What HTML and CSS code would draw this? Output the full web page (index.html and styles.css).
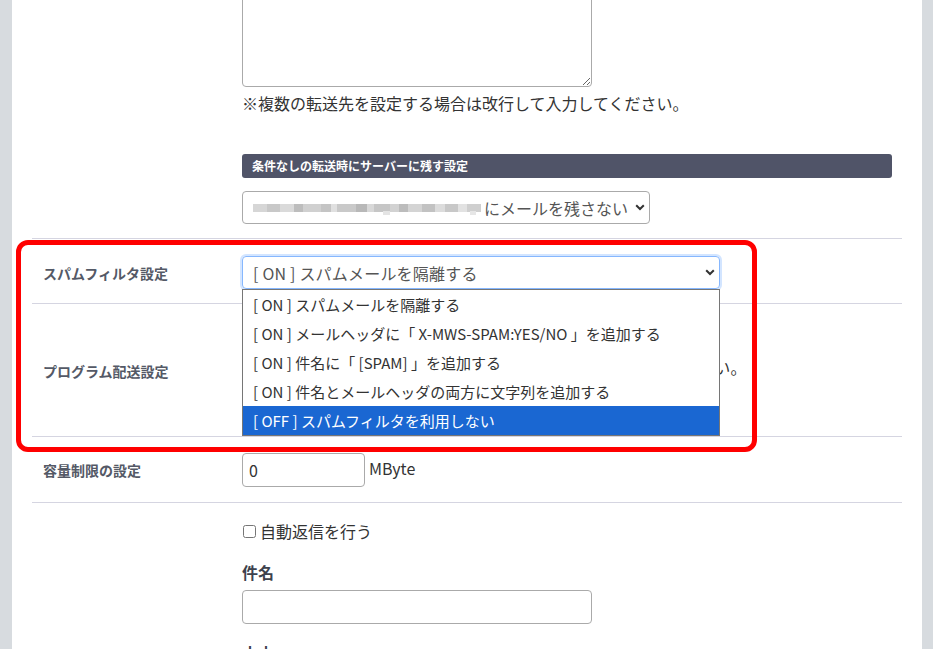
FILE: index.html
```html
<!DOCTYPE html>
<html lang="ja">
<head>
    <meta charset="UTF-8">
    <meta name="viewport" content="width=device-width, initial-scale=1.0">
    <title>メール設定</title>
    <link rel="stylesheet" href="styles.css">
</head>
<body>
    <div class="card">
        <!-- 転送設定 -->
        <div class="row">
            <div class="row-label"></div>
            <div class="row-body">
                <textarea class="forward-list"></textarea>
                <p class="note">※複数の転送先を設定する場合は改行して入力してください。</p>
                <div class="section-bar">条件なしの転送時にサーバーに残す設定</div>
                <div class="fake-select">
                    <span class="masked-address"></span>
                    <span>にメールを残さない</span>
                    <svg class="chevron" width="10" height="7" viewBox="0 0 10 7"><path d="M1.2 1.2L5 5l3.8-3.8" fill="none" stroke="#333" stroke-width="2"/></svg>
                </div>
            </div>
        </div>

        <div class="highlight">
            <div class="row row-spam">
                <div class="row-label">スパムフィルタ設定</div>
                <div class="row-body">
                    <div class="select-wrap">
                        <div class="fake-select spam-select focused">
                            <span>[ ON ] スパムメールを隔離する</span>
                            <svg class="chevron" width="10" height="7" viewBox="0 0 10 7"><path d="M1.2 1.2L5 5l3.8-3.8" fill="none" stroke="#333" stroke-width="2"/></svg>
                        </div>
                        <ul class="option-list">
                            <li>[ ON ] スパムメールを隔離する</li>
                            <li>[ ON ] メールヘッダに「 X-MWS-SPAM:YES/NO 」を追加する</li>
                            <li>[ ON ] 件名に「 [SPAM] 」を追加する</li>
                            <li>[ ON ] 件名とメールヘッダの両方に文字列を追加する</li>
                            <li class="active">[ OFF ] スパムフィルタを利用しない</li>
                        </ul>
                    </div>
                </div>
            </div>

            <div class="row row-program">
                <div class="row-label">プログラム配送設定</div>
                <div class="row-body">
                    <p class="program-note">プログラム配送を利用する場合はサポートへお問い合わせください。</p>
                </div>
            </div>
        </div>

        <div class="row row-quota">
            <div class="row-label">容量制限の設定</div>
            <div class="row-body inline">
                <input type="text" class="quota" value="0">
                <span class="unit">MByte</span>
            </div>
        </div>

        <div class="row row-top">
            <div class="row-label"></div>
            <div class="row-body">
                <label class="check"><input type="checkbox"> 自動返信を行う</label>
                <div class="field-title">件名</div>
                <input type="text" class="text-field">
                <div class="field-title">本文</div>
                <textarea class="forward-list"></textarea>
            </div>
        </div>
    </div>
</body>
</html>
```

FILE: styles.css
```css
html {
    overflow: hidden;
}
body {
    margin: 0;
    background-color: #d7dbdf;
    font-family: "Noto Sans CJK JP", "Noto Sans", sans-serif;
    color: #333;
    font-size: 16px;
    line-height: 24px;
}
.card {
    background-color: #fff;
    margin: -49px 11px 0 12px;
    padding: 0 20px;
}
.row {
    display: grid;
    grid-template-columns: 210px 1fr;
    padding: 16px 0 14px;
    border-bottom: 1px solid #d5d5e1;
}
.row-label {
    display: flex;
    align-items: center;
    padding-left: 11px;
    font-size: 14px;
    font-weight: bold;
    color: #545966;
}
.row-body {
    min-width: 0;
}
.forward-list {
    display: block;
    box-sizing: border-box;
    width: 350px;
    height: 120px;
    border: 1px solid #aaa;
    border-radius: 4px;
    font-family: inherit;
}
.note {
    margin: 4px 0 0;
}
.section-bar {
    margin-top: 39px;
    height: 24px;
    line-height: 24px;
    padding-left: 10px;
    border-radius: 3px;
    background-color: #505468;
    color: #fff;
    font-size: 12px;
    font-weight: bold;
    margin-right: 10px;
}
.fake-select {
    display: flex;
    align-items: center;
    box-sizing: border-box;
    width: 408px;
    height: 33px;
    margin-top: 13px;
    padding: 0 4px 0 10px;
    border: 1px solid #aaa;
    border-radius: 4px;
    color: #555;
    white-space: nowrap;
}
.fake-select .chevron {
    margin-left: auto;
    flex-shrink: 0;
}
.masked-address {
    display: inline-block;
    flex-shrink: 0;
    width: 228px;
    height: 14px;
    margin-right: 3px;
    background:
        linear-gradient(90deg, transparent 0 57%, #e4e4e4 57% 60%, transparent 60% 95%, #e6e6e6 95% 98%, transparent 98%) 0 10px / 100% 4px no-repeat,
        linear-gradient(90deg, #d6d6d6 0 6%, #c8c8c8 6% 12%, #dadada 12% 18%, #bdbdbd 18% 22%, #d0d0d0 22% 30%, #c4c4c4 30% 34%, #e0e0e0 34% 37%, #c9c9c9 37% 45%, #b8b8b8 45% 50%, #d8d8d8 50% 53%, #c6c6c6 53% 60%, #d2d2d2 60% 64%, #bcbcbc 64% 68%, #d4d4d4 68% 74%, #c2c2c2 74% 80%, #dcdcdc 80% 84%, #c8c8c8 84% 90%, #e2e2e2 90% 94%, #cfcfcf 94% 100%) 0 3px / 100% 8px no-repeat;
}
.highlight {
    position: relative;
}
.highlight::after {
    content: "";
    position: absolute;
    top: 1px;
    left: -16px;
    width: 741px;
    height: 212px;
    box-sizing: border-box;
    border: 5px solid #ff0000;
    border-radius: 12px;
    pointer-events: none;
    z-index: 3;
}
.row-spam {
    padding: 17px 0 14px;
}
.select-wrap {
    position: relative;
    width: 478px;
}
.spam-select {
    width: 478px;
    margin-top: 0;
    letter-spacing: 0.2px;
}
.focused {
    border-color: #86b7fe;
    box-shadow: 0 0 0 2px rgba(13, 110, 253, 0.18);
}
.option-list {
    position: absolute;
    top: 33px;
    left: 0;
    right: 0;
    z-index: 2;
    margin: 0;
    padding: 0;
    list-style: none;
    background-color: #fff;
    border: 1px solid #767676;
}
.option-list li {
    height: 29px;
    line-height: 30px;
    padding-left: 10px;
    font-size: 15px;
    color: #333;
}
.option-list .active {
    background-color: #1a67d2;
    color: #fff;
}
.row-program {
    height: 102px;
}
.program-note {
    margin: 35px 0 0;
    letter-spacing: 0.3px;
}
.row-quota {
    padding-bottom: 15px;
}
.inline {
    display: flex;
    align-items: flex-start;
    gap: 4px;
}
.quota {
    box-sizing: border-box;
    width: 123px;
    height: 34px;
    padding: 0 6px;
    border: 1px solid #aaa;
    border-radius: 4px;
    font-family: inherit;
    font-size: 16px;
    color: #333;
}
.unit {
    line-height: 30px;
}
.check {
    display: flex;
    align-items: center;
    gap: 4px;
}
.check input {
    margin: 0 0 0 1px;
    width: 13px;
    height: 13px;
}
.field-title {
    margin-top: 17px;
    font-weight: bold;
    color: #3d424d;
}
.text-field {
    display: block;
    box-sizing: border-box;
    width: 350px;
    height: 34px;
    margin-top: 6px;
    border: 1px solid #aaa;
    border-radius: 4px;
}
```
